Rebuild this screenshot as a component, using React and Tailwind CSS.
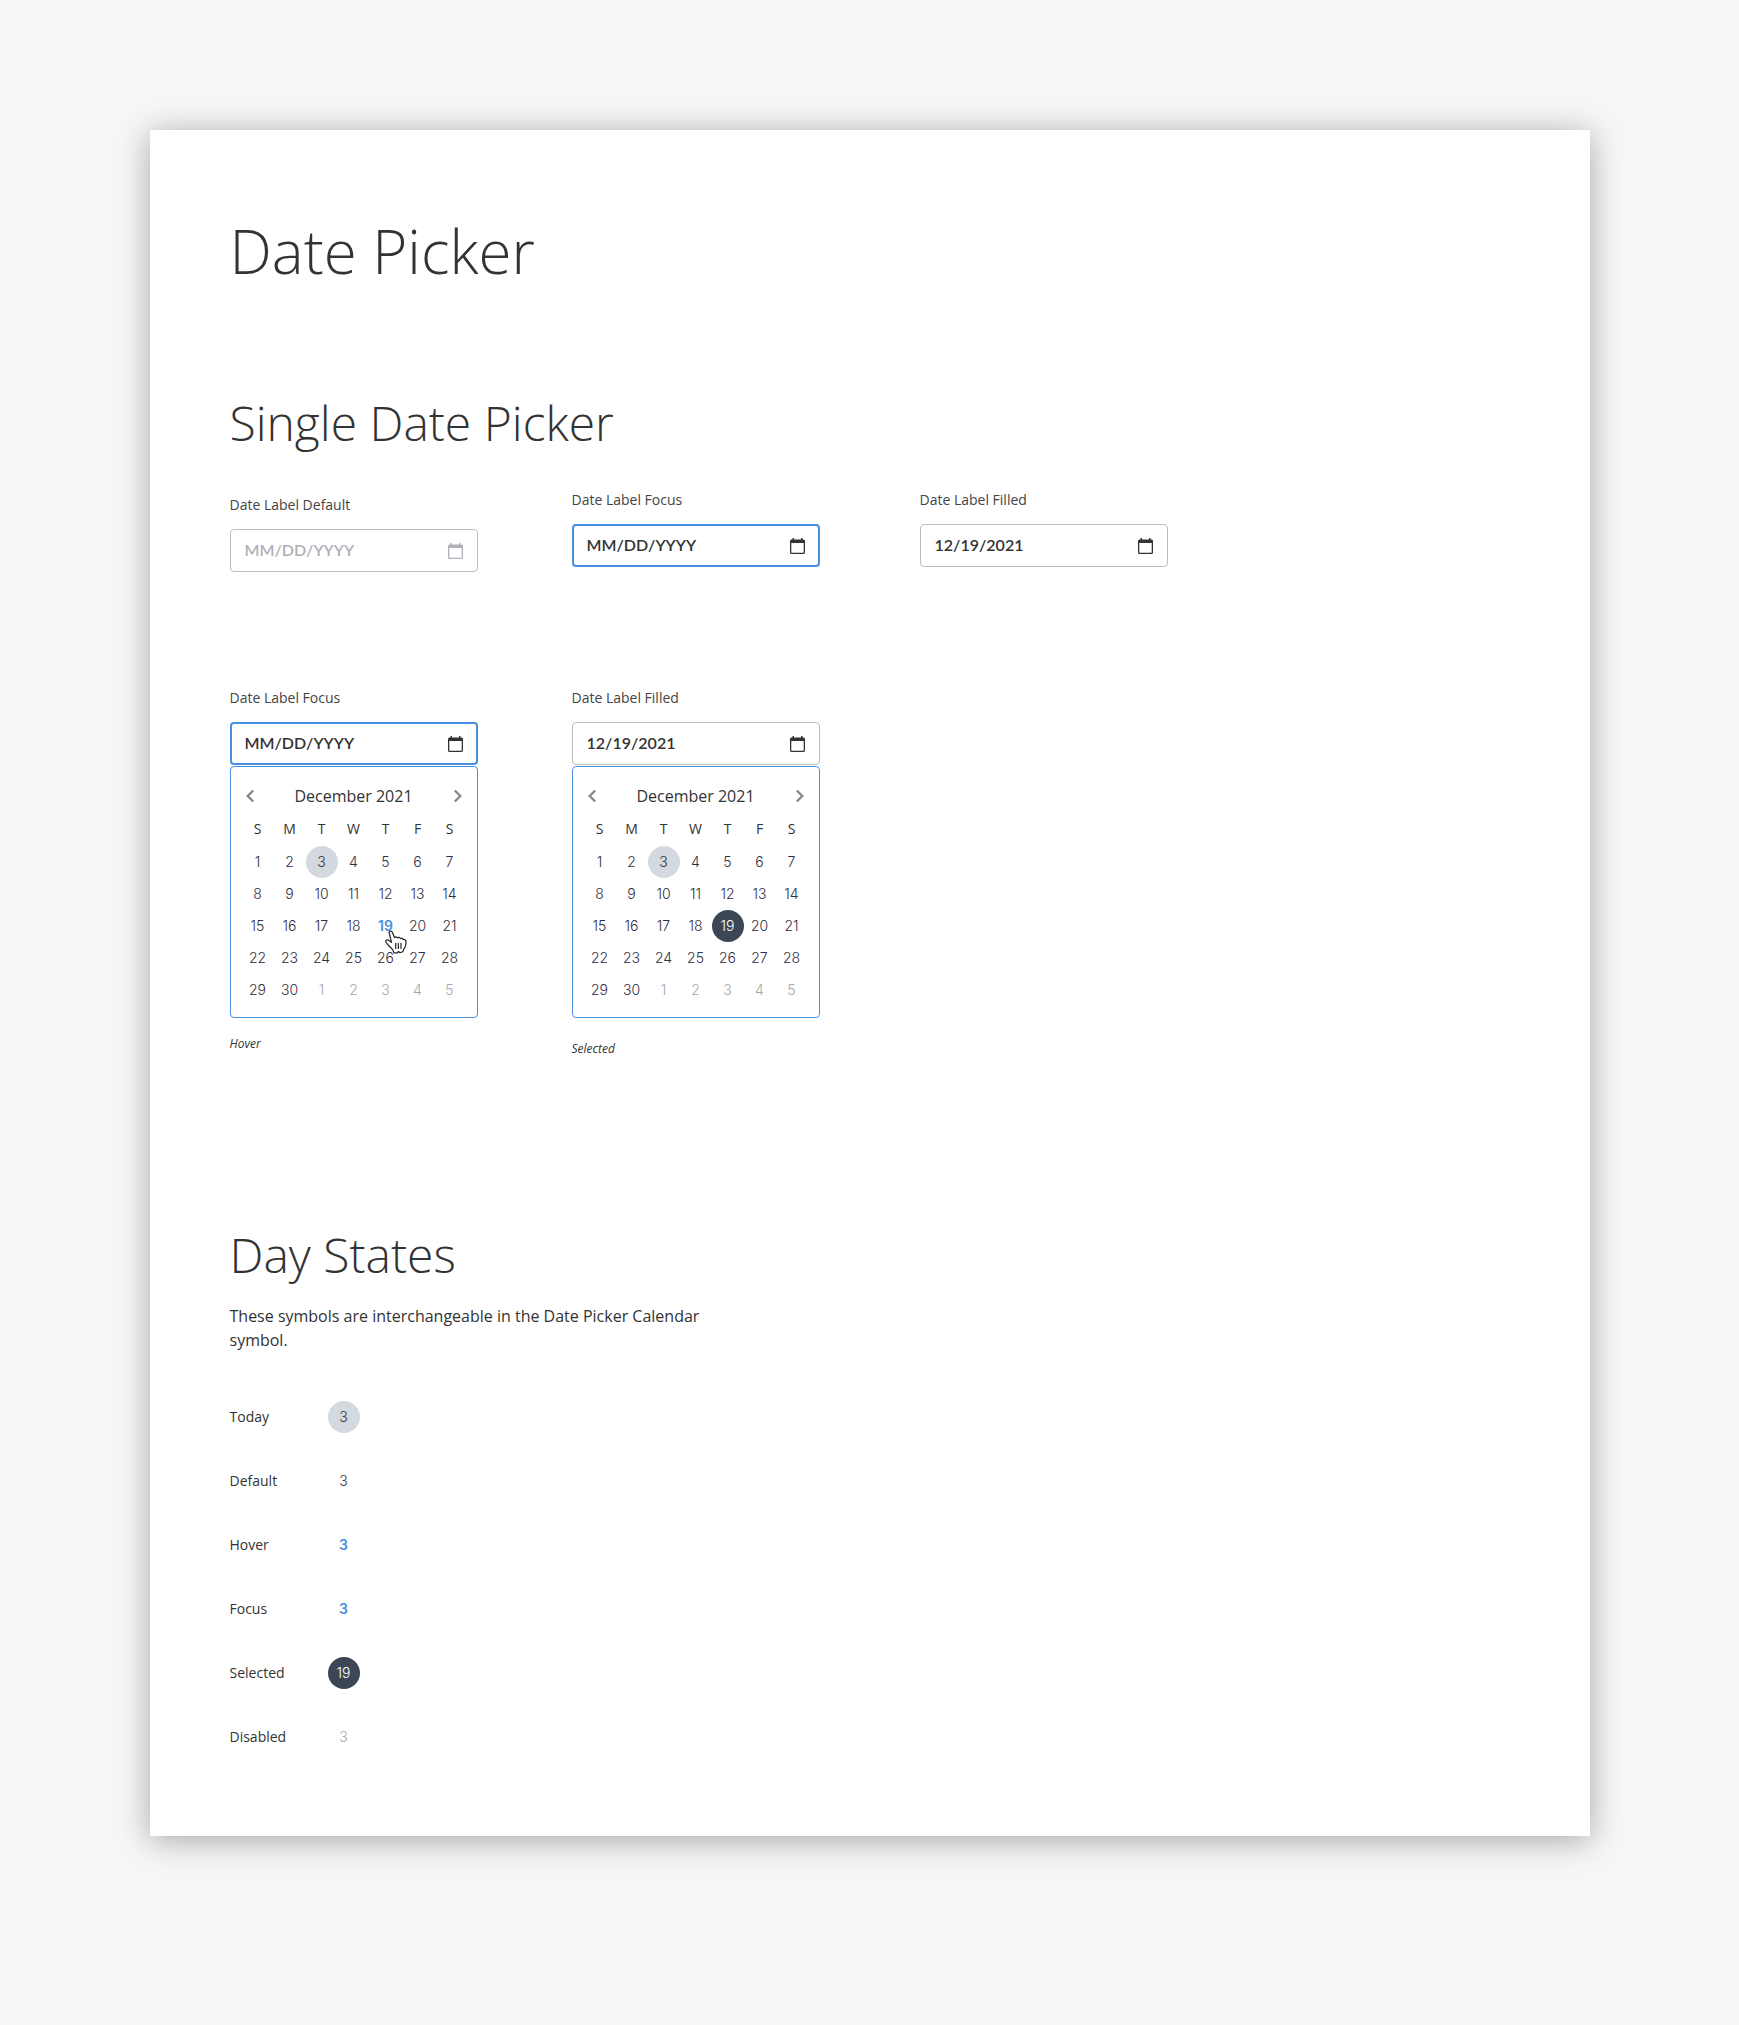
/**
 * App.jsx — Date Picker spec sheet
 * Single date picker fields, the calendar popover and the individual day states.
 */

import React from "react";

const OPEN_SANS = "font-['Open_Sans',sans-serif]";
const INTER = "font-[Inter,'Open_Sans',sans-serif]";
const LATO = "font-[Lato,'Open_Sans',sans-serif]";

const WEEKDAYS = ["S", "M", "T", "W", "T", "F", "S"];

// Five weeks, the last five cells belong to the next month
const WEEKS = [0, 1, 2, 3, 4].map((week) =>
  [1, 2, 3, 4, 5, 6, 7].map((day) => {
    const n = week * 7 + day;
    return n > 30 ? { day: n - 30, outside: true } : { day: n, outside: false };
  })
);

const DAY_STYLES = {
  default: "font-light text-[#2f2d46]",
  today: "bg-[#d3d9df] font-light text-[#2f2d46]",
  hover: "font-semibold text-[#4a90e2]",
  selected: "bg-[#3b4754] font-light text-white",
  disabled: "font-light text-[#a6a6ac]",
};

const FIELD_STYLES = {
  default: "border border-[#bdbdbd] px-[14px] text-[#b1afb8]",
  focus: "border-2 border-[#4a90e2] px-[13px] text-[#333333]",
  filled: "border border-[#bdbdbd] px-[14px] text-[#333333]",
};

// ── Icons ──────────────────────────────────────────────────────────────────
function CalendarIcon() {
  return (
    <svg viewBox="0 0 15 16" className="h-4 w-[15px]" fill="currentColor">
      <path d="M2.5 0H4v1.500h7V0h1.500v1.500h1A1.500 1.500 0 0 1 15 3v11.500a1.500 1.500 0 0 1-1.500 1.500h-12A1.500 1.500 0 0 1 0 14.500V3a1.500 1.500 0 0 1 1.500-1.500h1zM1.300 5v9.700h12.400V5z" />
    </svg>
  );
}

function Chevron({ direction }) {
  return (
    <svg viewBox="0 0 24 24" className="size-6" fill="none" stroke="currentColor" strokeWidth="2.4">
      <path d={direction === "left" ? "M14.200 6.500L8.700 12l5.500 5.500" : "M9.800 6.500l5.500 5.500-5.500 5.500"} />
    </svg>
  );
}

function HandPointer() {
  return (
    <svg
      viewBox="0 0 22 24"
      className="pointer-events-none absolute top-5 left-[15px] h-6 w-[22px]"
      fill="white"
      stroke="#222222"
      strokeWidth="1.2"
      strokeLinejoin="round"
      strokeLinecap="round"
    >
      <path d="M4.200 3C3.800 1 6.500.3 7.300 2.200L9.500 7.600c.5-1 2.300-1 2.900.3.7-.9 2.500-.6 3.100.7.8-.7 2.400-.2 2.800 1 .9-.4 2.500.3 2.700 1.800.3 2.800-.3 5-2 7.400l-1.200 2.900-3 1-1.200-1.200-1.600 1.600-3.200-.4-1-2.800C6.500 18 3 15.500 1 12.200.2 10.200 2.300 9.200 3.900 10.500l2.600 1.800z" />
      <path d="M10.700 13.300v5.200M13.300 13.300v5.200M16 13.300v5.200" fill="none" />
    </svg>
  );
}

// ── Day ────────────────────────────────────────────────────────────────────
function Day({ state = "default", children }) {
  return (
    <button
      type="button"
      disabled={state === "disabled"}
      className={`${INTER} block size-8 rounded-full text-center text-sm leading-8 ${DAY_STYLES[state]}`}
    >
      {children}
    </button>
  );
}

// ── Field ──────────────────────────────────────────────────────────────────
function DateField({ id, label, state = "default", value = "" }) {
  return (
    <div>
      <label htmlFor={id} className="mb-3 block text-sm leading-6 text-[#444444]">
        {label}
      </label>
      <div className={`flex h-[43px] items-center rounded bg-white ${FIELD_STYLES[state]}`}>
        <input
          id={id}
          type="text"
          defaultValue={value}
          placeholder="MM/DD/YYYY"
          className={`${LATO} w-0 grow bg-transparent pb-0.5 text-base font-semibold outline-none placeholder:text-current`}
        />
        <button type="button" aria-label="Open calendar">
          <CalendarIcon />
        </button>
      </div>
    </div>
  );
}

// ── Calendar ───────────────────────────────────────────────────────────────
function Calendar({ hovered, selected }) {
  const stateOf = ({ day, outside }) => {
    if (outside) return "disabled";
    if (day === selected) return "selected";
    if (day === hovered) return "hover";
    return day === 3 ? "today" : "default";
  };

  return (
    <div className="mt-px rounded border border-[#4a90e2] bg-white pt-3 pb-[11px]">
      <div className="flex h-[34px] items-center justify-between px-2 text-[#888888]">
        <button type="button" aria-label="Previous month">
          <Chevron direction="left" />
        </button>
        <span className="text-base leading-6 text-[#333333]">December 2021</span>
        <button type="button" aria-label="Next month">
          <Chevron direction="right" />
        </button>
      </div>
      <table className="mx-auto w-56 table-fixed border-collapse">
        <thead>
          <tr>
            {WEEKDAYS.map((name, i) => (
              <th key={i} className="h-[33px] p-0 align-top text-sm leading-8 font-normal text-[#333333]">
                {name}
              </th>
            ))}
          </tr>
        </thead>
        <tbody>
          {WEEKS.map((week, i) => (
            <tr key={i}>
              {week.map((cell) => (
                <td key={cell.day} className="relative p-0">
                  <Day state={stateOf(cell)}>{cell.day}</Day>
                  {!cell.outside && cell.day === hovered && <HandPointer />}
                </td>
              ))}
            </tr>
          ))}
        </tbody>
      </table>
    </div>
  );
}

// ── Day states ─────────────────────────────────────────────────────────────
const DAY_STATES = [
  { label: "Today", state: "today", day: 3 },
  { label: "Default", state: "default", day: 3 },
  { label: "Hover", state: "hover", day: 3 },
  { label: "Focus", state: "hover", day: 3 },
  { label: "Selected", state: "selected", day: 19 },
  { label: "Disabled", state: "disabled", day: 3 },
];

export default function App() {
  return (
    <div className={`${OPEN_SANS} min-h-screen bg-[#f6f6f6] pt-[130px] pb-[189px] text-[#333333]`}>
      <main className="mx-auto max-w-[1440px] bg-white px-20 pt-20 pb-[83px] shadow-[0_4px_30px_rgba(0,0,0,0.32)]">
        <h1 className="text-[60px] leading-[82px] font-light">Date Picker</h1>

        <section className="mt-[99px]">
          <h2 className="text-5xl leading-[64px] font-light">Single Date Picker</h2>

          <div className="mt-[33px] grid grid-cols-[342px_348px_248px]">
            <div className="w-[248px] pt-[5px]">
              <DateField id="date-default" label="Date Label Default" />
            </div>
            <div className="w-[248px]">
              <DateField id="date-focus" label="Date Label Focus" state="focus" />
            </div>
            <div className="w-[248px]">
              <DateField id="date-filled" label="Date Label Filled" state="filled" value="12/19/2021" />
            </div>
          </div>

          <div className="mt-[114px] grid grid-cols-[342px_348px]">
            <div className="w-[248px]">
              <DateField id="date-open-focus" label="Date Label Focus" state="focus" />
              <Calendar hovered={19} />
              <p className="mt-[18px] text-xs italic">Hover</p>
            </div>
            <div className="w-[248px]">
              <DateField id="date-open-filled" label="Date Label Filled" state="filled" value="12/19/2021" />
              <Calendar selected={19} />
              <p className="mt-[23px] text-xs italic">Selected</p>
            </div>
          </div>
        </section>

        <section className="mt-[166px]">
          <h2 className="text-5xl leading-[64px] font-light">Day States</h2>
          <p className="mt-[17px] max-w-[480px] text-base leading-6">
            These symbols are interchangeable in the Date Picker Calendar symbol.
          </p>
          <dl className="mt-[49px] flex flex-col gap-8">
            {DAY_STATES.map(({ label, state, day }) => (
              <div key={label} className="flex h-8 items-center">
                <dt className="w-[98px] text-sm">{label}</dt>
                <dd>
                  <Day state={state}>{day}</Day>
                </dd>
              </div>
            ))}
          </dl>
        </section>
      </main>
    </div>
  );
}
